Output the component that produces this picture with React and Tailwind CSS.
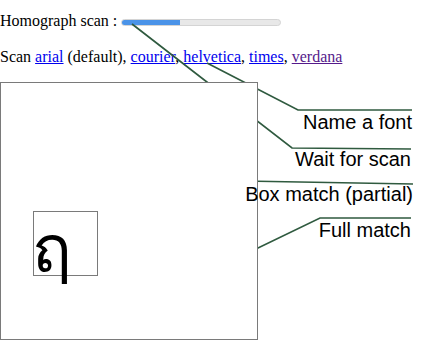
export default function App() {
  const lines = [
    "132,24 292,148 411,149",
    "207,63 298,110 412,110",
    "66,210 243,181 413,184",
    "200,276 320,218 411,218",
  ];

  return (
    <div className="relative w-[437px] h-[362px] overflow-hidden bg-white text-black">
      {/* page text */}
      <div className="relative font-['Liberation_Serif',serif] text-[16px] leading-[18px]">
        <div className="pt-[12px] whitespace-nowrap">
          Homograph scan :{" "}
          <span className="inline-block align-middle w-[160px] h-[7px] rounded-full bg-[#e8e8e8] border border-[#d4d4d4] overflow-hidden">
            <span className="block h-full w-[58px] bg-[#4a93e8]" />
          </span>
        </div>
        <div className="mt-[18px] whitespace-nowrap">
          Scan <a href="#" className="text-[#0000ee] underline">arial</a> (default),{" "}
          <a href="#" className="text-[#0000ee] underline">courier</a>,{" "}
          <a href="#" className="text-[#0000ee] underline">helvetica</a>,{" "}
          <a href="#" className="text-[#0000ee] underline">times</a>,{" "}
          <a href="#" className="text-[#551a8b] underline">verdana</a>
        </div>
      </div>

      {/* leader lines, under the scan box */}
      <svg className="absolute inset-0 z-0 pointer-events-none" width="437" height="362">
        {lines.map((pts, i) => (
          <polyline key={i} points={pts} fill="none" stroke="#2f5a3f" strokeWidth="1.7" />
        ))}
      </svg>

      {/* scan box */}
      <div className="relative z-10 mt-[16px] w-[258px] h-[258px] bg-white border border-[#7a7a7a] pl-[32px] pt-[128px]">
        <div className="w-[65px] h-[65px] border border-[#7a7a7a]">
          <span className="block mt-[5px] -ml-[2px] font-['DejaVu_Sans',sans-serif] text-[66px] leading-[66px]">
            ฤ
          </span>
        </div>
      </div>

      {/* labels */}
      <div className="absolute z-20 right-[25px] top-[110px] flex flex-col items-end pointer-events-none font-['Liberation_Sans',sans-serif] text-[20px] leading-[24px] whitespace-nowrap">
        <div>Name a font</div>
        <div className="mt-[13px] mr-[1px]">Wait for scan</div>
        <div className="mt-[11px] -mr-[1px]">Box match (partial)</div>
        <div className="mt-[12px] mr-[1px]">Full match</div>
      </div>
    </div>
  );
}
